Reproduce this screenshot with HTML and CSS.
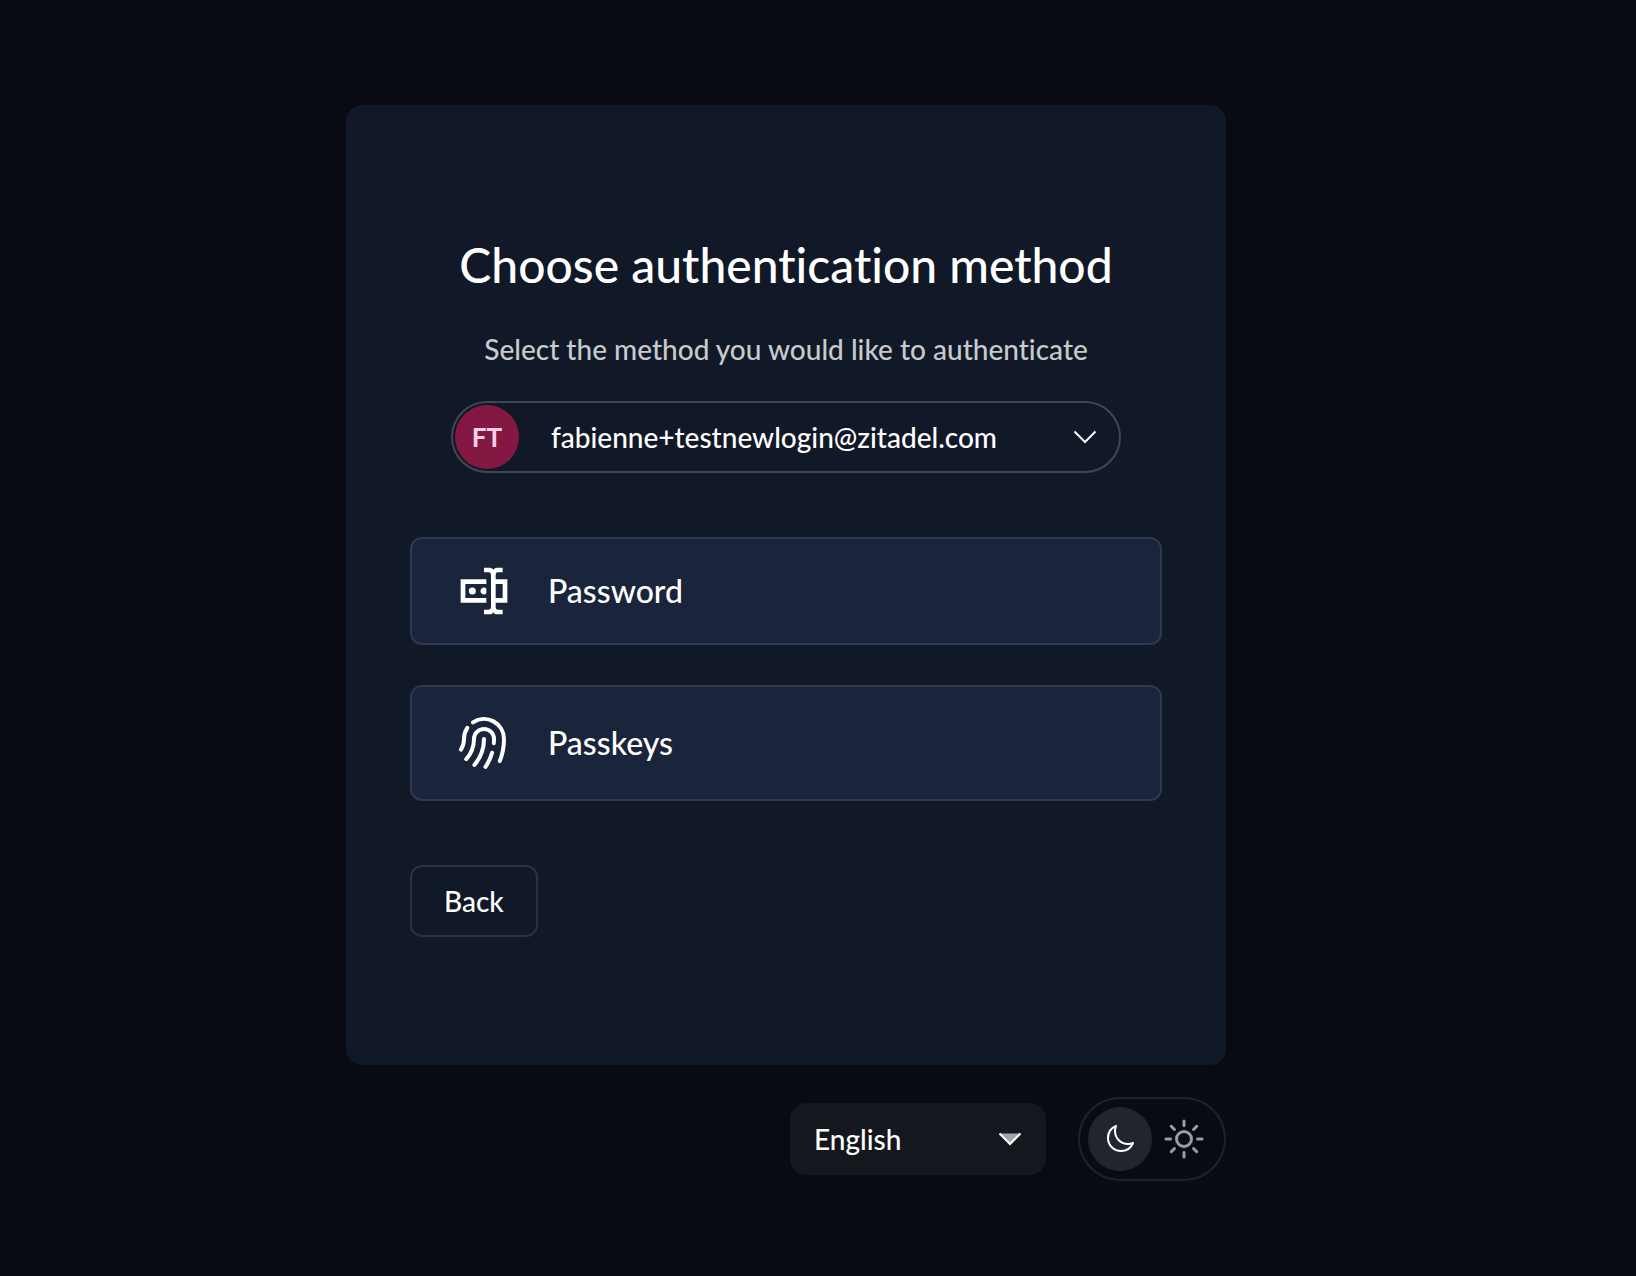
FILE: index.html
```html
<!DOCTYPE html>
<html lang="en">
<head>
<meta charset="utf-8">
<meta name="viewport" content="width=device-width, initial-scale=1">
<title>Choose authentication method</title>
<link rel="stylesheet" href="styles.css">
</head>
<body>
<div class="page">
  <main class="card">
    <h1 class="title">Choose authentication method</h1>
    <p class="subtitle">Select the method you would like to authenticate</p>
    <button class="account" type="button">
      <span class="avatar">FT</span>
      <span class="account-name">fabienne+testnewlogin@zitadel.com</span>
      <svg class="account-chevron" viewBox="0 0 32 32" aria-hidden="true"><path d="M5.500 10.500 16 21 26.500 10.500"/></svg>
    </button>
    <div class="methods">
      <a class="method" href="#password">
        <span class="method-icon"><svg class="icon-password" viewBox="0 0 24 24" aria-hidden="true"><path d="M17,7H22V17H17V19A1,1 0 0,0 18,20H20V22H17.5C16.95,22 16,21.55 16,21C16,21.55 15.05,22 14.5,22H12V20H14A1,1 0 0,0 15,19V5A1,1 0 0,0 14,4H12V2H14.5C15.05,2 16,2.45 16,3C16,2.45 16.95,2 17.5,2H20V4H18A1,1 0 0,0 17,5V7M2,7H13V9H4V15H13V17H2V7M20,15V9H17V15H20M8.5,12A1.5,1.5 0 0,0 7,10.5A1.5,1.5 0 0,0 5.5,12A1.5,1.5 0 0,0 7,13.5A1.5,1.5 0 0,0 8.5,12M13,10.89C12.39,10.33 11.44,10.38 10.88,11C10.32,11.6 10.37,12.55 11,13.11C11.55,13.63 12.43,13.63 13,13.11V10.89Z"/></svg></span>
        <span>Password</span>
      </a>
      <a class="method" href="#passkeys">
        <span class="method-icon"><svg class="icon-passkey" viewBox="0 0 24 24" aria-hidden="true"><path d="M7.864 4.243A7.5 7.5 0 0119.5 10.5c0 2.92-.556 5.709-1.568 8.268M5.742 6.364A7.465 7.465 0 004.5 10.5a7.464 7.464 0 01-1.15 3.993m1.989 3.559A11.209 11.209 0 008.25 10.5a3.75 3.75 0 117.5 0c0 .527-.021 1.049-.064 1.565M12 10.5a14.94 14.94 0 01-3.6 9.75m6.633-4.596a18.666 18.666 0 01-2.485 5.33"/></svg></span>
        <span>Passkeys</span>
      </a>
    </div>
    <button class="back" type="button">Back</button>
  </main>
  <footer class="controls">
    <div class="language">
      <select class="language-select" aria-label="Language">
        <option>English</option>
        <option>Deutsch</option>
      </select>
      <svg class="language-arrow" viewBox="0 0 32 32" aria-hidden="true"><path d="M5.500 10.500 16 21 26.500 10.500"/></svg>
    </div>
    <div class="theme">
      <button class="theme-option theme-active" type="button" aria-label="Dark theme">
        <svg class="icon-moon" viewBox="0 0 24 24" aria-hidden="true"><path d="M21.752 15.002A9.718 9.718 0 0118 15.75c-5.385 0-9.75-4.365-9.75-9.75 0-1.33.266-2.597.748-3.752A9.753 9.753 0 003 11.25C3 16.635 7.365 21 12.75 21a9.753 9.753 0 009.002-5.998z"/></svg>
      </button>
      <button class="theme-option" type="button" aria-label="Light theme">
        <svg class="icon-sun" viewBox="0 0 24 24" aria-hidden="true"><path d="M12 3v2.25m6.364.386l-1.591 1.591M21 12h-2.25m-.386 6.364l-1.591-1.591M12 18.75V21m-4.773-4.227l-1.591 1.591M5.25 12H3m4.227-4.773L5.636 5.636M15.75 12a3.75 3.75 0 11-7.5 0 3.75 3.75 0 017.5 0z"/></svg>
      </button>
    </div>
  </footer>
</div>
</body>
</html>
```
FILE: styles.css
```css
* {
  box-sizing: border-box;
}

body {
  margin: 0;
  min-height: 100vh;
  background: #080b12;
  color: #fff;
  font-family: Lato, "Liberation Sans", sans-serif;
  font-size: 28px;
  font-variant-ligatures: none;
  line-height: 40px;
}

button,
select {
  font: inherit;
  color: inherit;
  cursor: pointer;
}

.page {
  padding: 105px 64px 64px 0;
}

.card,
.controls {
  width: 100%;
  max-width: 880px;
  margin: 0 auto;
}

.card {
  display: flex;
  flex-direction: column;
  align-items: center;
  padding: 128px 64px;
  border-radius: 16px;
  background: #111827;
}

.title {
  margin: 0 0 32px;
  font-size: 48px;
  font-weight: 500;
  line-height: 64px;
  text-align: center;
}

.subtitle {
  margin: 0 0 32px;
  color: #c8cacd;
  font-weight: 500;
  text-align: center;
}

.account {
  display: flex;
  align-items: center;
  margin: 0 0 64px;
  padding: 2px 18px 2px 2px;
  border: 2px solid #414653;
  border-radius: 36px;
  background: transparent;
  font-weight: 500;
}

.avatar {
  display: flex;
  align-items: center;
  justify-content: center;
  width: 64px;
  height: 64px;
  margin-right: 32px;
  border-radius: 50%;
  background: #831843;
  color: #fbcfe8;
  font-size: 26px;
  font-weight: 700;
}

.account-chevron {
  width: 32px;
  height: 32px;
  margin-left: 72px;
  fill: none;
  stroke: #fff;
  stroke-width: 2;
}

.methods {
  display: flex;
  flex-direction: column;
  gap: 40px;
  width: 100%;
  margin-bottom: 64px;
}

.method {
  display: flex;
  align-items: center;
  gap: 32px;
  padding: 24px 40px;
  border: 2px solid #2f394e;
  border-radius: 12px;
  background: #1a243b;
  color: inherit;
  font-size: 32px;
  font-weight: 500;
  text-decoration: none;
}

.method-icon {
  display: flex;
  justify-content: center;
  width: 64px;
}

.icon-password {
  width: 56px;
  height: 56px;
  fill: #fff;
}

.icon-passkey {
  width: 64px;
  height: 64px;
  fill: none;
  stroke: #fff;
  stroke-width: 1.5;
  stroke-linecap: round;
  stroke-linejoin: round;
}

.back {
  align-self: flex-start;
  padding: 14px 32px;
  border: 2px solid #2b3140;
  border-radius: 12px;
  background: transparent;
  font-weight: 500;
}

.controls {
  display: flex;
  align-items: center;
  justify-content: flex-end;
  gap: 32px;
  padding-top: 32px;
}

.language {
  position: relative;
  width: 256px;
}

.language-select {
  display: block;
  width: 100%;
  height: 72px;
  padding: 0 64px 0 24px;
  border: 0;
  border-radius: 16px;
  background: #14171e;
  font-weight: 500;
  appearance: none;
}

.language-arrow {
  position: absolute;
  top: 20px;
  right: 20px;
  width: 32px;
  height: 32px;
  fill: #a3a3a6;
  stroke: #fff;
  stroke-width: 2;
  pointer-events: none;
}

.theme {
  display: flex;
  padding: 8px;
  border: 2px solid #1e232b;
  border-radius: 42px;
}

.theme-option {
  display: flex;
  align-items: center;
  justify-content: center;
  width: 64px;
  height: 64px;
  padding: 0;
  border: 0;
  border-radius: 50%;
  background: transparent;
}

.theme-active {
  background: #22252d;
}

.icon-moon,
.icon-sun {
  fill: none;
  stroke-width: 1.5;
  stroke-linecap: round;
  stroke-linejoin: round;
}

.icon-moon {
  width: 32px;
  height: 32px;
  stroke: #fff;
}

.icon-sun {
  width: 48px;
  height: 48px;
  stroke: #9c9da0;
}
```
